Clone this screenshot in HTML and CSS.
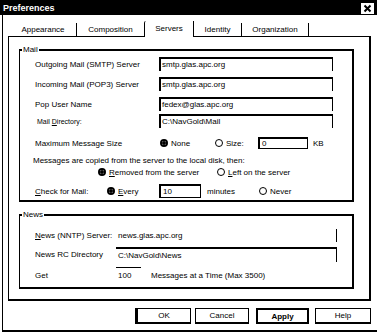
FILE: index.html
```html
<!DOCTYPE html>
<html lang="en">
<head>
    <meta charset="UTF-8">
    <title>Preferences</title>
    <link rel="stylesheet" href="styles.css">
</head>
<body>
    <div class="window">
        <div class="titlebar">
            <span class="title">Preferences</span>
            <svg class="close" width="13" height="11" viewBox="0 0 13 11">
                <rect width="13" height="11" fill="#fff"/>
                <path d="M3.5 2.5l6 6M9.5 2.5l-6 6" stroke="#000" stroke-width="2"/>
            </svg>
        </div>
        <div class="frame">
            <div class="tabs">
                <div class="tab tab-appearance">Appearance</div>
                <div class="tab tab-composition">Composition</div>
                <div class="tab tab-servers">Servers</div>
                <div class="tab tab-identity">Identity</div>
                <div class="tab tab-organization">Organization</div>
            </div>
            <div class="panel">
                <fieldset class="group group-mail">
                    <legend>Mail</legend>
                    <div class="row row-smtp">
                        <span class="label">Outgoing Mail (SMTP) Server</span>
                        <span class="field field-long">smtp.glas.apc.org</span>
                    </div>
                    <div class="row row-pop">
                        <span class="label">Incoming Mail (POP3) Server</span>
                        <span class="field field-long">smtp.glas.apc.org</span>
                    </div>
                    <div class="row row-user">
                        <span class="label">Pop User Name</span>
                        <span class="field field-long">fedex@glas.apc.org</span>
                    </div>
                    <div class="row row-dir">
                        <span class="label label-small">Mail <u>D</u>irectory:</span>
                        <span class="field field-long">C:\NavGold\Mail</span>
                    </div>
                    <div class="row row-size">
                        <span class="label">Maximum Message Size</span>
                        <span class="choice choice-none"><i class="radio on"></i>None</span>
                        <span class="choice choice-size"><i class="radio"></i>Size:</span>
                        <span class="field field-box field-kb">0</span>
                        <span class="unit">KB</span>
                    </div>
                    <div class="row row-note">
                        Messages are copied from the server to the local disk, then:
                    </div>
                    <div class="row row-keep">
                        <span class="choice choice-removed"><i class="radio on"></i><span><u>R</u>emoved from the server</span></span>
                        <span class="choice"><i class="radio"></i><span><u>L</u>eft on the server</span></span>
                    </div>
                    <div class="row row-check">
                        <span class="label label-check"><u>C</u>heck for Mail:</span>
                        <span class="choice choice-every"><i class="radio on"></i><span><u>E</u>very</span></span>
                        <span class="field field-box field-min">10</span>
                        <span class="unit unit-min">minutes</span>
                        <span class="choice"><i class="radio"></i>Never</span>
                    </div>
                </fieldset>
                <fieldset class="group group-news">
                    <legend>News</legend>
                    <div class="row row-nntp">
                        <span class="label label-news"><u>N</u>ews (NNTP) Server:</span>
                        <span class="field field-news field-plain">news.glas.apc.org</span>
                    </div>
                    <div class="row row-rc">
                        <span class="label label-news">News RC Directory</span>
                        <span class="field field-news field-rc">C:\NavGold\News</span>
                    </div>
                    <div class="row row-get">
                        <span class="label label-news">Get</span>
                        <span class="field field-get">100</span>
                        <span class="unit unit-get">Messages at a Time (Max 3500)</span>
                    </div>
                </fieldset>
            </div>
            <div class="buttons">
                <button class="btn btn-ok">OK</button>
                <button class="btn btn-cancel">Cancel</button>
                <button class="btn btn-apply">Apply</button>
                <button class="btn btn-help">Help</button>
            </div>
        </div>
    </div>
</body>
</html>
```

FILE: styles.css
```css
* {
    box-sizing: border-box;
}
body {
    margin: 0;
    background: #fff;
    color: #000;
    font-family: "Liberation Sans", Arial, sans-serif;
    font-size: 8px;
}
.window {
    width: 377px;
    height: 334px;
}
.titlebar {
    height: 15px;
    background: #000;
    display: flex;
    align-items: center;
    justify-content: space-between;
    padding: 0 3px 0 3px;
}
.title {
    color: #fff;
    font-weight: bold;
    font-size: 9px;
}
.close {
    display: block;
    margin-top: 1px;
}
.frame {
    margin-left: 2px;
    height: 317px;
    border-left: 1px solid #000;
    border-bottom: 2px solid #000;
    padding-top: 6px;
}

/* tabs */
.tabs {
    display: flex;
    align-items: flex-end;
    height: 16px;
    margin-left: 7px;
    margin-bottom: -1px;
}
.tab {
    height: 14px;
    line-height: 14px;
    text-align: center;
    border-right: 1px solid #000;
}
.tab-appearance {
    width: 67px;
}
.tab-composition {
    width: 67px;
    border-right: none;
}
.tab-servers {
    position: relative;
    width: 50px;
    height: 16px;
    padding-top: 1px;
    background: #fff;
    border-left: 1px solid #000;
    border-top-left-radius: 2px;
}
.tab-identity {
    width: 48px;
}
.tab-organization {
    width: 67px;
}

/* page */
.panel {
    margin-left: 5px;
    width: 363px;
    height: 265px;
    border-top: 1px solid #000;
    border-left: 1px solid #000;
    border-right: 2px solid #000;
    border-bottom: 2px solid #000;
}
.group {
    margin: 0 0 0 10px;
    padding: 0;
    min-width: 0;
    width: 335px;
    border-top: 2px solid #000;
    border-left: 1px solid #000;
    border-right: 2px solid #000;
    border-bottom: 2px solid #000;
}
.group legend {
    margin-left: 2px;
    padding: 0 1px;
    line-height: 9px;
    font-size: 8px;
}
.group-mail {
    margin-top: 8px;
    padding-bottom: 2px;
}
.group-news {
    margin-top: 8px;
    padding-bottom: 4px;
}
.row {
    display: flex;
    align-items: center;
    padding-left: 15px;
    white-space: nowrap;
}
.label {
    flex: none;
    width: 124px;
}
.label-small {
    font-size: 7px;
    padding-left: 2px;
}
.label-check {
    width: 72px;
}
.label-news {
    width: 81px;
}

.row-smtp { height: 14px; margin-top: 3px; }
.row-pop { height: 14px; margin-top: 6px; }
.row-user { height: 14px; margin-top: 6px; }
.row-dir { height: 14px; margin-top: 3px; }
.row-size { height: 12px; margin-top: 9px; }
.row-note { height: 10px; margin-top: 6px; padding-left: 13px; }
.row-keep { height: 10px; margin-top: 2px; padding-left: 78px; }
.row-check { height: 14px; margin-top: 7px; }
.row-nntp { height: 13px; margin-top: 10px; }
.row-rc { height: 15px; margin-top: 5px; }
.row-get { height: 16px; margin-top: 5px; }

/* inputs */
.field {
    display: block;
    height: 100%;
    padding-left: 1px;
    border-top: 2px solid #000;
    border-left: 2px solid #000;
    border-right: 1px solid #000;
    line-height: 11px;
}
.field-long {
    width: 174px;
}
.field-box {
    border-bottom: 1px solid #000;
    padding-left: 2px;
    line-height: 9px;
}
.field-kb {
    width: 50px;
}
.field-min {
    width: 42px;
    line-height: 11px;
}
.unit {
    margin-left: 5px;
}
.unit-min {
    margin-left: 6px;
    width: 52px;
}
.field-news {
    width: 221px;
    border-left: none;
    padding-left: 2px;
}
.field-plain {
    border-top: none;
    line-height: 13px;
}
.field-rc {
    line-height: 13px;
}
.field-get {
    width: 25px;
    border: none;
    border-top: 1px solid #000;
    padding-left: 2px;
    line-height: 15px;
}
.unit-get {
    margin-left: 10px;
}

/* radios */
.choice {
    display: flex;
    align-items: center;
    flex: none;
}
.choice-none {
    width: 56px;
    padding-left: 1px;
}
.choice-size {
    width: 43px;
}
.choice-removed {
    width: 119px;
}
.choice-every {
    width: 52px;
}
.radio {
    flex: none;
    width: 8px;
    height: 8px;
    margin-right: 3px;
    border: 1px solid #000;
    border-radius: 50%;
    background: #fff;
}
.radio.on {
    border-width: 2px;
    background: radial-gradient(circle, #000 0 1.5px, #fff 2px);
}

/* buttons */
.buttons {
    display: flex;
    margin-top: 7px;
    padding-left: 132px;
}
.btn {
    height: 16px;
    padding: 0;
    margin: 0;
    background: #fff;
    color: #000;
    font-family: inherit;
    font-size: 8px;
    border: 1px solid #000;
    border-bottom-width: 2px;
    border-radius: 0;
}
.btn-ok {
    width: 56px;
    border-left-width: 3px;
}
.btn-cancel {
    width: 54px;
    margin-left: 4px;
}
.btn-apply {
    width: 53px;
    margin-left: 7px;
    border-width: 2px;
    font-weight: bold;
}
.btn-help {
    width: 56px;
    margin-left: 6px;
}
```
